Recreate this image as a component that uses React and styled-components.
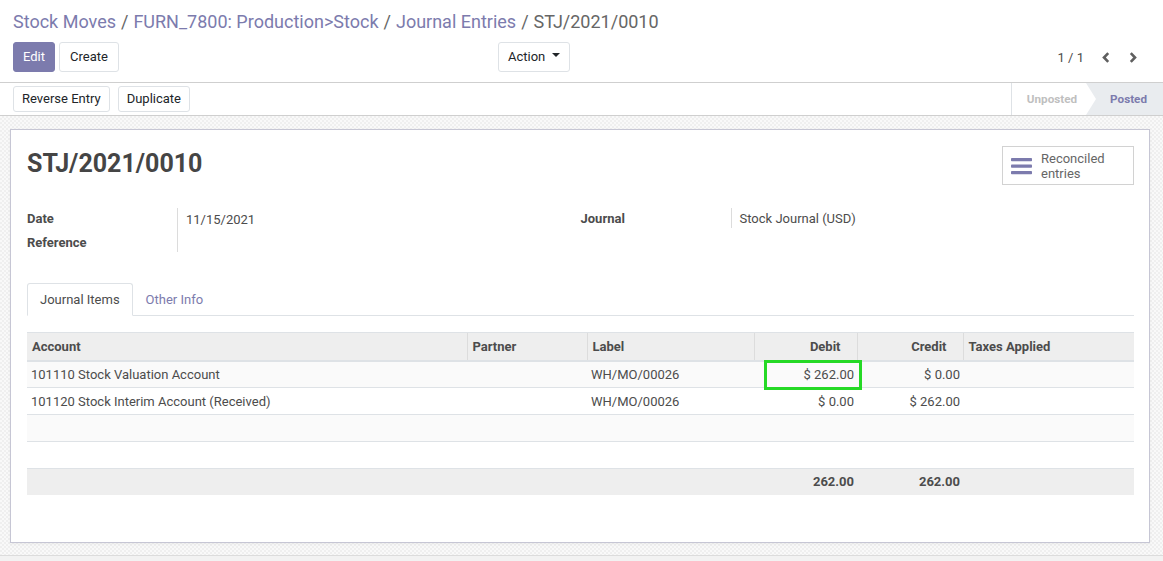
import React from 'react';
import styled, { createGlobalStyle } from 'styled-components';

const GlobalStyle = createGlobalStyle`
  html, body { margin: 0; padding: 0; height: 100%; }
  body {
    font-family: Roboto, "Noto Sans", "Liberation Sans", sans-serif;
    font-size: 13px;
    color: #4c4c4c;
    background: #fff;
  }
  #root { min-height: 100%; }
  *, *::before, *::after { box-sizing: border-box; }
`;

const Page = styled.div`
  display: flex;
  flex-direction: column;
  min-height: 100vh;
`;

/* ---------- control panel ---------- */
const ControlPanel = styled.div`
  padding: 8px 13px 10px 13px;
  border-bottom: 1px solid #cfcfcf;
  background: #fff;
`;

const Breadcrumb = styled.ol`
  list-style: none;
  margin: 0;
  padding: 0;
  display: flex;
  font-size: 18px;
  line-height: 27px;
  height: 27px;
  white-space: nowrap;
`;

const Crumb = styled.li`
  color: ${(p) => (p.$active ? '#666666' : '#7c7bad')};
  &:not(:first-child)::before {
    content: "/";
    color: #666666;
    padding: 0 5px;
  }
`;

const CpBottom = styled.div`
  display: flex;
  align-items: center;
  margin-top: 7px;
  height: 30px;
`;

const CpLeft = styled.div`
  display: flex;
  gap: 4px;
  width: 485px;
`;

const Btn = styled.button`
  font-family: inherit;
  font-size: 13px;
  line-height: 20px;
  height: ${(p) => (p.$small ? '26px' : '30px')};
  padding: ${(p) => (p.$small ? '2px 8px' : `4px ${p.$px || 9}px`)};
  border-radius: 3px;
  border: 1px solid ${(p) => (p.$primary ? '#7c7bad' : '#dee2e6')};
  background: ${(p) => (p.$primary ? '#7c7bad' : '#fff')};
  color: ${(p) => (p.$primary ? '#fff' : '#212529')};
  display: inline-flex;
  align-items: center;
  cursor: pointer;
`;

const Caret = styled.span`
  display: inline-block;
  margin-left: 7px;
  width: 0;
  height: 0;
  border-top: 4px solid #212529;
  border-left: 4px solid transparent;
  border-right: 4px solid transparent;
  transform: translateY(-2px);
`;

const Pager = styled.div`
  margin-left: auto;
  margin-right: 4px;
  display: flex;
  align-items: center;
`;

const PagerValue = styled.span`
  color: #4c4c4c;
  margin-right: 8px;
  font-size: 13px;
`;

const PagerBtn = styled.button`
  width: 27px;
  height: 30px;
  border: none;
  background: transparent;
  padding: 0;
  display: flex;
  align-items: center;
  justify-content: center;
  color: #5f5f5f;
`;

/* ---------- status header ---------- */
const StatusHeader = styled.div`
  display: flex;
  align-items: center;
  justify-content: space-between;
  height: 33px;
  border-bottom: 1px solid #cfcfcf;
  padding-left: 13px;
  background: #fff;
`;

const HeaderButtons = styled.div`
  display: flex;
  gap: 8px;
`;

const Statusbar = styled.div`
  display: flex;
  align-self: stretch;
  border-left: 1px solid #dee2e6;
`;

const StatusItem = styled.div`
  position: relative;
  display: flex;
  align-items: center;
  font-size: 11.7px;
  font-weight: 700;
  padding: ${(p) => (p.$current ? '0 16px 0 24px' : '0 9px 0 15px')};
  color: ${(p) => (p.$current ? '#7c7bad' : '#bfbfbf')};
  background: ${(p) => (p.$current ? '#e9ecef' : '#fff')};
  ${(p) =>
    !p.$current &&
    `
    &::after {
      content: "";
      position: absolute;
      top: 0;
      right: -10px;
      width: 0;
      height: 0;
      border-left: 10px solid #fff;
      border-top: 16px solid transparent;
      border-bottom: 16px solid transparent;
      z-index: 1;
    }
  `}
`;

/* ---------- sheet ---------- */
const SheetBg = styled.div`
  padding: 13px 13px 12px 10px;
  background-color: #f4f4f4;
  background-image: repeating-conic-gradient(#efefef 0 25%, #f9f9f9 0 50%);
  background-size: 4px 4px;
`;

const Sheet = styled.div`
  background: #fff;
  border: 1px solid #c6c6d4;
  box-shadow: 0 1px 3px rgba(0, 0, 0, 0.05);
  padding: 16px 15px 47px 16px;
`;

const SheetHead = styled.div`
  display: flex;
  justify-content: space-between;
  align-items: flex-start;
`;

const Title = styled.h1`
  margin: 2px 0 0;
  font-size: 25px;
  line-height: 31px;
  font-weight: 700;
  color: #454545;
`;

const StatButton = styled.button`
  width: 132px;
  height: 39px;
  border: 1px solid #d2d2d2;
  background: #fff;
  display: flex;
  align-items: center;
  padding: 0 8px;
  gap: 9px;
  font-family: inherit;
  cursor: pointer;
`;

const StatText = styled.span`
  font-size: 13px;
  line-height: 15px;
  color: #666;
  text-align: left;
`;

const FieldsGrid = styled.div`
  display: grid;
  grid-template-columns: 1fr 1fr;
  margin-top: 21px;
`;

const FieldGroup = styled.div`
  display: grid;
  grid-template-columns: 150px 1fr;
  grid-auto-rows: 24px;
  align-content: start;
`;

const FieldLabel = styled.div`
  font-weight: 700;
  display: flex;
  align-items: center;
  color: #4c4c4c;
`;

const FieldValue = styled.div`
  border-left: 1px solid #dcdcdc;
  padding-left: 8px;
  display: flex;
  align-items: center;
  margin: ${(p) => (p.$first ? '2px 0 0' : p.$last ? '0 0 2px' : '2px 0')};
  color: #4c4c4c;
`;

const Tabs = styled.ul`
  list-style: none;
  margin: 29px 0 0;
  padding: 0;
  display: flex;
  border-bottom: 1px solid #dee2e6;
`;

const Tab = styled.li`
  padding: 6px 12px;
  line-height: 19px;
  margin-bottom: -1px;
  border: 1px solid ${(p) => (p.$active ? '#dee2e6' : 'transparent')};
  border-bottom-color: ${(p) => (p.$active ? '#fff' : 'transparent')};
  border-radius: 3px 3px 0 0;
  background: ${(p) => (p.$active ? '#fff' : 'transparent')};
  color: ${(p) => (p.$active ? '#4c4c4c' : '#7c7bad')};
`;

const Table = styled.table`
  margin-top: 16px;
  width: 100%;
  border-collapse: collapse;
  table-layout: fixed;
`;

const Th = styled.th`
  height: 28px;
  background: #eeeeee;
  border-top: 1px solid #dee2e6;
  border-bottom: 2px solid #dee2e6;
  font-weight: 700;
  text-align: ${(p) => (p.$num ? 'right' : 'left')};
  padding: ${(p) => (p.$num ? '0 16px 0 4px' : '0 4px 0 5px')};
  color: #4c4c4c;
  & + & {
    border-left: 1px solid #dcdcdc;
  }
`;

const Tr = styled.tr`
  background: ${(p) => (p.$striped ? '#fafafa' : '#fff')};
`;

const Td = styled.td`
  position: relative;
  height: 27px;
  border-top: 1px solid #dee2e6;
  padding: ${(p) => (p.$num ? '0 3px 0 4px' : '0 4px')};
  text-align: ${(p) => (p.$num ? 'right' : 'left')};
  color: #4c4c4c;
  white-space: nowrap;
`;

const FootTd = styled.td`
  height: 26px;
  background: #eeeeee;
  border-top: 1px solid #dee2e6;
  padding: ${(p) => (p.$num ? '0 3px 0 4px' : '0 4px')};
  text-align: ${(p) => (p.$num ? 'right' : 'left')};
  font-weight: 700;
  color: #4c4c4c;
`;

const Highlight = styled.span`
  position: absolute;
  left: 10px;
  right: -5px;
  top: -2px;
  bottom: -3px;
  border: 3px solid #25d925;
  pointer-events: none;
`;

const BottomStrip = styled.div`
  flex: 1;
  min-height: 6px;
  border-top: 1px solid #dcdcdc;
  background: #f2f2f2;
`;

const ChevronLeft = () => (
  <svg width="8" height="11" viewBox="0 0 8 11">
    <polyline points="6.2,1.2 2,5.5 6.2,9.8" fill="none" stroke="currentColor" strokeWidth="2.6" />
  </svg>
);

const ChevronRight = () => (
  <svg width="8" height="11" viewBox="0 0 8 11">
    <polyline points="1.8,1.2 6,5.5 1.8,9.8" fill="none" stroke="currentColor" strokeWidth="2.6" />
  </svg>
);

const BarsIcon = () => (
  <svg width="21" height="18" viewBox="0 0 21 18">
    <rect x="0" y="1" width="21" height="3.2" rx="0.8" fill="#7c7bad" />
    <rect x="0" y="7.5" width="21" height="3.2" rx="0.8" fill="#7c7bad" />
    <rect x="0" y="14" width="21" height="3.2" rx="0.8" fill="#7c7bad" />
  </svg>
);

const lines = [
  { account: '101110 Stock Valuation Account', partner: '', label: 'WH/MO/00026', debit: '$ 262.00', credit: '$ 0.00', highlight: true },
  { account: '101120 Stock Interim Account (Received)', partner: '', label: 'WH/MO/00026', debit: '$ 0.00', credit: '$ 262.00' },
  null,
  null,
];

export default function App() {
  return (
    <Page>
      <GlobalStyle />
      <ControlPanel>
        <Breadcrumb>
          <Crumb>Stock Moves</Crumb>
          <Crumb>FURN_7800: Production&gt;Stock</Crumb>
          <Crumb>Journal Entries</Crumb>
          <Crumb $active>STJ/2021/0010</Crumb>
        </Breadcrumb>
        <CpBottom>
          <CpLeft>
            <Btn $primary $px={9}>Edit</Btn>
            <Btn $px={10}>Create</Btn>
          </CpLeft>
          <Btn $px={9}>
            Action
            <Caret />
          </Btn>
          <Pager>
            <PagerValue>1 / 1</PagerValue>
            <PagerBtn aria-label="Previous">
              <ChevronLeft />
            </PagerBtn>
            <PagerBtn aria-label="Next">
              <ChevronRight />
            </PagerBtn>
          </Pager>
        </CpBottom>
      </ControlPanel>

      <StatusHeader>
        <HeaderButtons>
          <Btn $small>Reverse Entry</Btn>
          <Btn $small>Duplicate</Btn>
        </HeaderButtons>
        <Statusbar>
          <StatusItem>Unposted</StatusItem>
          <StatusItem $current>Posted</StatusItem>
        </Statusbar>
      </StatusHeader>

      <SheetBg>
        <Sheet>
          <SheetHead>
            <Title>STJ/2021/0010</Title>
            <StatButton>
              <BarsIcon />
              <StatText>
                Reconciled
                <br />
                entries
              </StatText>
            </StatButton>
          </SheetHead>

          <FieldsGrid>
            <FieldGroup>
              <FieldLabel>Date</FieldLabel>
              <FieldValue $first>11/15/2021</FieldValue>
              <FieldLabel>Reference</FieldLabel>
              <FieldValue $last />
            </FieldGroup>
            <FieldGroup>
              <FieldLabel>Journal</FieldLabel>
              <FieldValue>Stock Journal (USD)</FieldValue>
            </FieldGroup>
          </FieldsGrid>

          <Tabs>
            <Tab $active>Journal Items</Tab>
            <Tab>Other Info</Tab>
          </Tabs>

          <Table>
            <colgroup>
              <col style={{ width: 440 }} />
              <col style={{ width: 120 }} />
              <col style={{ width: 167 }} />
              <col style={{ width: 103 }} />
              <col style={{ width: 106 }} />
              <col />
            </colgroup>
            <thead>
              <tr>
                <Th>Account</Th>
                <Th>Partner</Th>
                <Th>Label</Th>
                <Th $num>Debit</Th>
                <Th $num>Credit</Th>
                <Th>Taxes Applied</Th>
              </tr>
            </thead>
            <tbody>
              {lines.map((l, i) => (
                <Tr key={i} $striped={i % 2 === 0}>
                  <Td>{l ? l.account : ''}</Td>
                  <Td>{l ? l.partner : ''}</Td>
                  <Td>{l ? l.label : ''}</Td>
                  <Td $num>
                    {l ? l.debit : ''}
                    {l && l.highlight && <Highlight />}
                  </Td>
                  <Td $num>{l ? l.credit : ''}</Td>
                  <Td />
                </Tr>
              ))}
            </tbody>
            <tfoot>
              <tr>
                <FootTd />
                <FootTd />
                <FootTd />
                <FootTd $num>262.00</FootTd>
                <FootTd $num>262.00</FootTd>
                <FootTd />
              </tr>
            </tfoot>
          </Table>
        </Sheet>
      </SheetBg>
      <BottomStrip />
    </Page>
  );
}
